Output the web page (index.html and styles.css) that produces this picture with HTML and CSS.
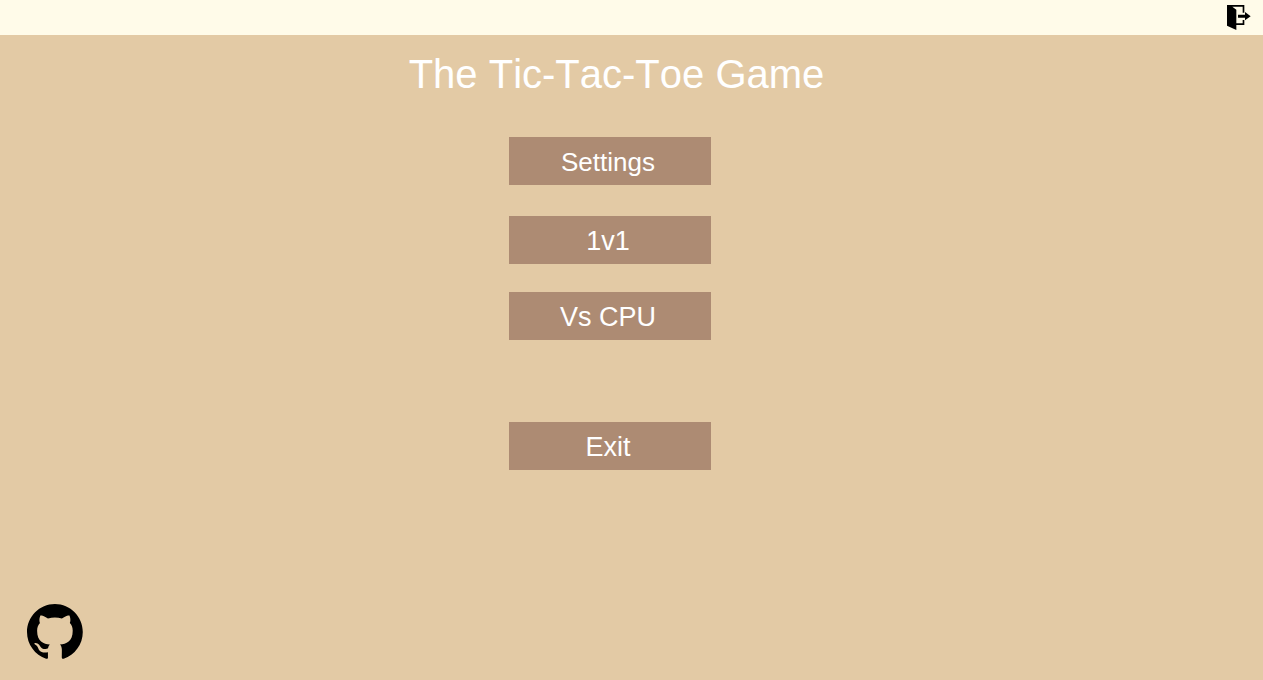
FILE: index.html
```html
<!DOCTYPE html>
<html lang="en">
<head>
<meta charset="utf-8">
<title>The Tic-Tac-Toe Game</title>
<link rel="stylesheet" href="styles.css">
</head>
<body>
<header class="topbar">
  <button class="icon-button" type="button" aria-label="Leave">
    <svg class="door-icon" viewBox="0 0 72 78" aria-hidden="true">
      <path d="M0 3H52V26H47V8H16L28 17V58H47V48H52V63H28V78L0 65Z"/>
      <path d="M33 32H54V24L71 36.500L54 49V41H33Z"/>
    </svg>
  </button>
</header>
<main class="menu">
  <h1 class="title">The Tic-Tac-Toe Game</h1>
  <nav class="actions">
    <button class="action action-settings" type="button">Settings</button>
    <button class="action action-duel" type="button">1v1</button>
    <button class="action action-cpu" type="button">Vs CPU</button>
    <button class="action action-exit" type="button">Exit</button>
  </nav>
</main>
<footer class="footer">
  <a class="github" href="https://github.com" aria-label="GitHub">
    <svg class="github-icon" viewBox="0 0 98 98" aria-hidden="true">
      <path fill-rule="evenodd" d="M48.854 0C21.839 0 0 22 0 49.217c0 21.756 13.993 40.172 33.405 46.69 2.427.49 3.316-1.059 3.316-2.362 0-1.141-.08-5.052-.08-9.127-13.59 2.934-16.42-5.867-16.42-5.867-2.184-5.704-5.42-7.17-5.42-7.17-4.448-3.015.324-3.015.324-3.015 4.934.326 7.523 5.052 7.523 5.052 4.367 7.496 11.404 5.378 14.235 4.074.404-3.178 1.699-5.378 3.074-6.6-10.839-1.141-22.243-5.378-22.243-24.283 0-5.378 1.94-9.778 5.014-13.2-.485-1.222-2.184-6.275.486-13.038 0 0 4.125-1.304 13.426 5.052a46.97 46.97 0 0 1 12.214-1.63c4.125 0 8.33.571 12.213 1.63 9.302-6.356 13.427-5.052 13.427-5.052 2.67 6.763.97 11.816.485 13.038 3.155 3.422 5.015 7.822 5.015 13.2 0 18.905-11.404 23.06-22.324 24.283 1.78 1.548 3.316 4.481 3.316 9.126 0 6.6-.08 11.897-.08 13.526 0 1.304.89 2.853 3.316 2.364 19.412-6.52 33.405-24.935 33.405-46.691C97.707 22 75.788 0 48.854 0z"/>
    </svg>
  </a>
</footer>
</body>
</html>
```
FILE: styles.css
```css
* {
  box-sizing: border-box;
}

body {
  display: flex;
  flex-direction: column;
  min-height: 100vh;
  margin: 0;
  background: #e3caa5;
  color: #fff;
  font-family: "Liberation Sans", Arial, sans-serif;
  font-kerning: none;
}

.topbar {
  display: flex;
  justify-content: flex-end;
  padding: 4px 12px 5px;
  background: #fffbe9;
}

.icon-button {
  display: block;
  padding: 0;
  border: 0;
  background: none;
  color: #000;
  cursor: pointer;
}

.door-icon {
  display: block;
  width: 24px;
  height: 26px;
  fill: currentColor;
}

.menu {
  flex: 1;
}

.title {
  margin: 0;
  padding: 16px 30px 0 0;
  font-size: 40px;
  font-weight: 400;
  line-height: 46px;
  text-align: center;
}

.actions {
  display: flex;
  flex-direction: column;
  align-items: center;
  padding: 40px 43px 0 0;
}

.action {
  min-width: 202px;
  padding: 10px 4px 8px 0;
  border: 0;
  background: #ad8b73;
  color: #fff;
  font-family: inherit;
  font-size: 27px;
  line-height: 30px;
  font-kerning: none;
  cursor: pointer;
}

.action-settings {
  font-size: 26px;
}

.action-duel {
  margin-top: 31px;
}

.action-cpu {
  margin-top: 28px;
}

.action-exit {
  margin-top: 82px;
}

.footer {
  display: flex;
  padding: 0 27px 20px;
}

.github {
  color: #000;
}

.github-icon {
  display: block;
  width: 56px;
  height: 56px;
  fill: currentColor;
}
```
